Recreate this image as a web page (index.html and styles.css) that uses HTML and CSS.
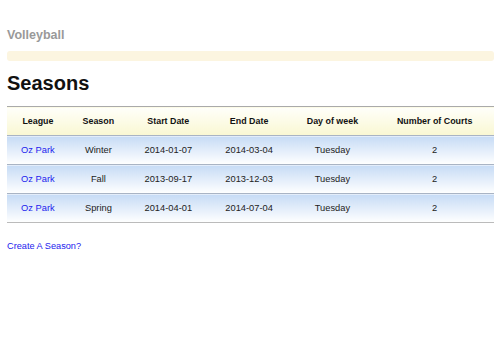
FILE: index.html
```html
<!DOCTYPE html>
<html lang="en">
<head>
  <meta charset="UTF-8" />
  <title>Seasons — Volleyball</title>
  <link rel="stylesheet" href="styles.css">
</head>
<body>
  <header>
    <p class="brand">Volleyball</p>
    <div class="notice"></div>
  </header>

  <main>
    <h1>Seasons</h1>
    <table class="seasons">
      <thead>
        <tr>
          <th>League</th>
          <th>Season</th>
          <th>Start Date</th>
          <th>End Date</th>
          <th>Day of week</th>
          <th>Number of Courts</th>
        </tr>
      </thead>
      <tbody>
        <tr>
          <td><a href="#">Oz Park</a></td>
          <td>Winter</td>
          <td>2014-01-07</td>
          <td>2014-03-04</td>
          <td>Tuesday</td>
          <td>2</td>
        </tr>
        <tr>
          <td><a href="#">Oz Park</a></td>
          <td>Fall</td>
          <td>2013-09-17</td>
          <td>2013-12-03</td>
          <td>Tuesday</td>
          <td>2</td>
        </tr>
        <tr>
          <td><a href="#">Oz Park</a></td>
          <td>Spring</td>
          <td>2014-04-01</td>
          <td>2014-07-04</td>
          <td>Tuesday</td>
          <td>2</td>
        </tr>
      </tbody>
    </table>
    <p class="actions"><a href="#">Create A Season?</a></p>
  </main>
</body>
</html>
```

FILE: styles.css
```css
body {
  font-family: 'Liberation Sans', Arial, sans-serif;
  margin: 0;
  padding: 0 9px 0 7px;
  background: #fff;
  color: #222;
}
a {
  color: #2222ee;
  text-decoration: none;
}
.brand {
  margin: 0;
  padding-top: 27px;
  font-size: 12.5px;
  font-weight: 700;
  color: #999;
  line-height: 16px;
}
.notice {
  margin-top: 8px;
  height: 10px;
  background: #fcf5e0;
  border-radius: 3px;
}
h1 {
  margin: 9px 0 0;
  font-size: 20px;
  line-height: 26px;
  color: #111;
}
.seasons {
  width: 100%;
  margin-top: 10px;
  border-collapse: collapse;
  font-size: 9.3px;
  border-top: 1px solid #aaa;
  border-bottom: 1px solid #bbb;
}
.seasons th {
  height: 28px;
  padding: 0 6px;
  font-size: 8.9px;
  font-weight: 700;
  color: #111;
  background: linear-gradient(#fffffa, #f9f7d2);
}
.seasons td {
  height: 28px;
  padding: 0 6px;
  text-align: center;
  color: #222;
  border-top: 1px solid #a9b4c4;
  background: linear-gradient(#c6dbf5, #ffffff);
}
.actions {
  margin: 18px 0 0;
  font-size: 9.2px;
}
```
